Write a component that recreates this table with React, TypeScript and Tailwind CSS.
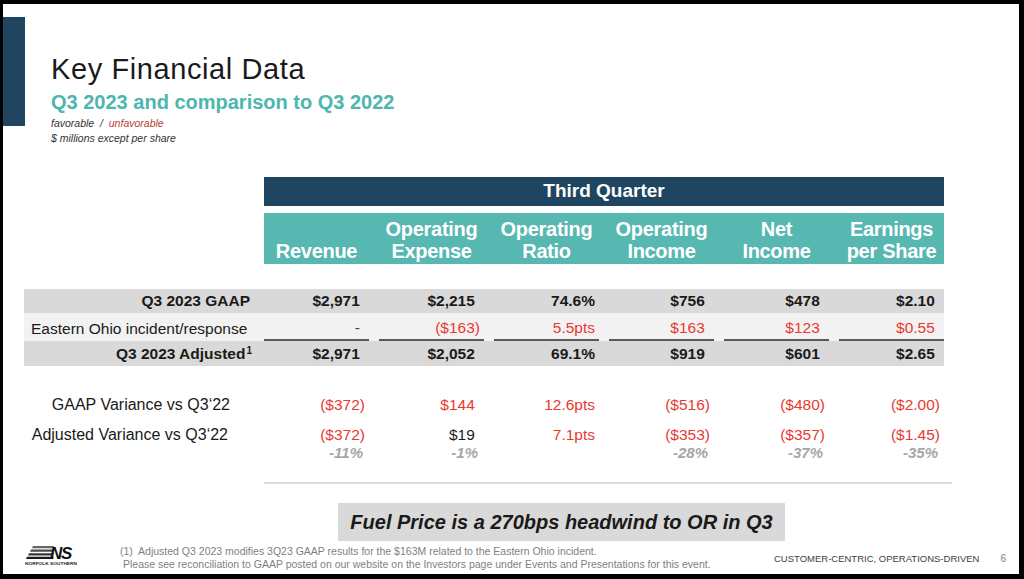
import React from "react"

const headers = [
  ["", "Revenue"],
  ["Operating", "Expense"],
  ["Operating", "Ratio"],
  ["Operating", "Income"],
  ["Net", "Income"],
  ["Earnings", "per Share"],
]

const gaap = ["$2,971", "$2,215", "74.6%", "$756", "$478", "$2.10"]
const incident = ["-", "($163)", "5.5pts", "$163", "$123", "$0.55"]
const adjusted = ["$2,971", "$2,052", "69.1%", "$919", "$601", "$2.65"]

const gaapVar = ["($372)", "$144", "12.6pts", "($516)", "($480)", "($2.00)"]
const adjVar = ["($372)", "$19", "7.1pts", "($353)", "($357)", "($1.45)"]
const adjVarColor = [true, false, true, true, true, true]
const adjPct = ["-11%", "-1%", "", "-28%", "-37%", "-35%"]

// positive numbers leave room for a closing paren so they line up with negatives
function Val({ v }: { v: string }) {
  const hang = v.startsWith("$") || v === "-"
  return (
    <>
      {v}
      {hang && <span className="invisible">)</span>}
    </>
  )
}

function NsLogo() {
  return (
    <svg width="60" height="25" viewBox="0 0 60 25">
      <polygon points="11,4 32,4 31,6.2 10,6.2" fill="#666" />
      <polygon points="9,7.6 32,7.6 31,9.8 8,9.8" fill="#4a4a4a" />
      <polygon points="7,11.2 32,11.2 31,13.4 6,13.4" fill="#333" />
      <polygon points="5,14.8 32,14.8 31,17 4,17" fill="#1a1a1a" />
      <text
        x="28"
        y="17"
        fontFamily="Liberation Sans, Arial, sans-serif"
        fontWeight="bold"
        fontStyle="italic"
        fontSize="17"
        letterSpacing="-1.2"
        fill="#111"
      >
        NS
      </text>
      <text
        x="3"
        y="22.5"
        fontFamily="Liberation Sans, Arial, sans-serif"
        fontWeight="bold"
        fontSize="3.6"
        textLength="52"
        lengthAdjust="spacingAndGlyphs"
        fill="#222"
      >
        NORFOLK SOUTHERN
      </text>
    </svg>
  )
}

export default function App() {
  return (
    <div className="w-[1024px] h-[579px] bg-black pt-[4px] pl-[3px] pr-[5px] pb-[5px] font-['Liberation_Sans',Arial,sans-serif]">
      <div className="w-full h-full bg-white flex flex-col overflow-hidden">
        {/* title block */}
        <div className="flex items-start">
          <div className="w-[22px] h-[109px] mt-[13px] bg-[#1f4561]" />
          <div className="ml-[26px] mt-[51px] flex flex-col">
            <h1 className="text-[29px] leading-[29px] tracking-[0.6px] text-[#1a1a1a]">
              Key Financial Data
            </h1>
            <div className="mt-[8px] text-[20px] leading-[20px] font-bold text-[#4db6ae]">
              Q3 2023 and comparison to Q3 2022
            </div>
            <div className="mt-[5px] text-[10.5px] leading-[12px] italic text-[#333]">
              favorable&nbsp; / &nbsp;<span className="text-[#b5402f]">unfavorable</span>
            </div>
            <div className="mt-[3px] text-[10.5px] leading-[12px] italic text-[#333]">
              $ millions except per share
            </div>
          </div>
        </div>

        {/* table header */}
        <div className="ml-[261px] w-[680px] mt-[33px] h-[29px] bg-[#1f4561] flex items-center justify-center text-white font-bold text-[19px]">
          Third Quarter
        </div>
        <div className="ml-[261px] w-[680px] mt-[7px] h-[51px] bg-[#57b7b1] flex gap-[10px] items-end pb-[2px]">
          {headers.map((h, i) => (
            <div key={i} className="w-[105px] text-center text-white font-bold text-[20px] leading-[22px] tracking-[-0.3px]">
              <div>{h[0] || "\u00a0"}</div>
              <div className="whitespace-nowrap">{h[1]}</div>
            </div>
          ))}
        </div>

        {/* data rows */}
        <div className="ml-[21px] w-[920px] mt-[25px] flex flex-col text-[15.5px]">
          <div className="h-[24px] bg-[#d9d9d9] flex items-center font-bold text-[#1a1a1a]">
            <div className="w-[240px] text-right pr-[14px]">Q3 2023 GAAP</div>
            <div className="flex gap-[10px]">
              {gaap.map((v, i) => (
                <div key={i} className="w-[105px] text-right pr-[4px]">
                  <Val v={v} />
                </div>
              ))}
            </div>
          </div>
          <div className="h-[28px] bg-[#f2f2f2] flex items-stretch">
            <div className="w-[240px] pl-[7px] pt-[3px] flex items-center text-[#1a1a1a] whitespace-nowrap">
              Eastern Ohio incident/response
            </div>
            <div className="flex gap-[10px]">
              {incident.map((v, i) => (
                <div
                  key={i}
                  className={
                    "w-[105px] text-right pr-[4px] pt-[3px] border-b-2 border-[#5a5a5a] flex items-center justify-end " +
                    (i === 0 ? "text-[#404040]" : "text-[#e8392f]")
                  }
                >
                  <span>
                    <Val v={v} />
                  </span>
                </div>
              ))}
            </div>
          </div>
          <div className="h-[25px] bg-[#d9d9d9] flex items-center font-bold text-[#1a1a1a]">
            <div className="w-[240px] text-right pr-[12px]">
              Q3 2023 Adjusted
              <span className="text-[10px] relative -top-[5px] ml-[1px]">1</span>
            </div>
            <div className="flex gap-[10px]">
              {adjusted.map((v, i) => (
                <div key={i} className="w-[105px] text-right pr-[4px]">
                  <Val v={v} />
                </div>
              ))}
            </div>
          </div>
        </div>

        {/* variance rows */}
        <div className="ml-[21px] w-[920px] mt-[30px] flex flex-col text-[15.5px]">
          <div className="h-[18px] flex items-center">
            <div className="w-[240px] text-right pr-[34px] text-[16px] text-[#1a1a1a]">GAAP Variance vs Q3‘22</div>
            <div className="flex gap-[10px] text-[#e8392f]">
              {gaapVar.map((v, i) => (
                <div key={i} className="w-[105px] text-right pr-[4px]">
                  <Val v={v} />
                </div>
              ))}
            </div>
          </div>
          <div className="h-[18px] mt-[12px] flex items-center">
            <div className="w-[240px] text-right pr-[36px] text-[16px] text-[#1a1a1a] whitespace-nowrap">
              Adjusted Variance vs Q3‘22
            </div>
            <div className="flex gap-[10px]">
              {adjVar.map((v, i) => (
                <div
                  key={i}
                  className={"w-[105px] text-right pr-[4px] " + (adjVarColor[i] ? "text-[#e8392f]" : "text-[#1a1a1a]")}
                >
                  <Val v={v} />
                </div>
              ))}
            </div>
          </div>
          <div className="h-[18px] flex items-center">
            <div className="w-[240px]" />
            <div className="flex gap-[10px] text-[#a6a6a6] font-bold italic text-[15px]">
              {adjPct.map((v, i) => (
                <div key={i} className="w-[105px] text-right pr-[6px]">
                  {v}
                </div>
              ))}
            </div>
          </div>
        </div>

        <div className="ml-[261px] w-[688px] mt-[20px] h-[2px] bg-[#dededa]" />

        <div className="ml-[335px] w-[447px] mt-[19px] h-[38px] bg-[#d9d9d9] flex items-center justify-center text-[20px] font-bold italic text-[#1a1a1a]">
          Fuel Price is a 270bps headwind to OR in Q3
        </div>

        {/* footer */}
        <div className="mt-[4px] flex items-start">
          <div className="ml-[19px] w-[60px] -mt-[3px]">
            <NsLogo />
          </div>
          <div className="ml-[38px] text-[10.5px] leading-[12.5px] text-[#7f7f7f]">
            <div>(1)&nbsp; Adjusted Q3 2023 modifies 3Q23 GAAP results for the $163M related to the Eastern Ohio incident.</div>
            <div className="pl-[3px]">
              Please see reconciliation to GAAP posted on our website on the Investors page under Events and Presentations for this event.
            </div>
          </div>
          <div className="ml-auto mt-[8px] flex items-center text-[9.5px] leading-[12px]">
            <span className="text-[#404040]">CUSTOMER-CENTRIC, OPERATIONS-DRIVEN</span>
            <span className="ml-[21px] mr-[13px] text-[10px] text-[#7f7f7f]">6</span>
          </div>
        </div>
      </div>
    </div>
  )
}
